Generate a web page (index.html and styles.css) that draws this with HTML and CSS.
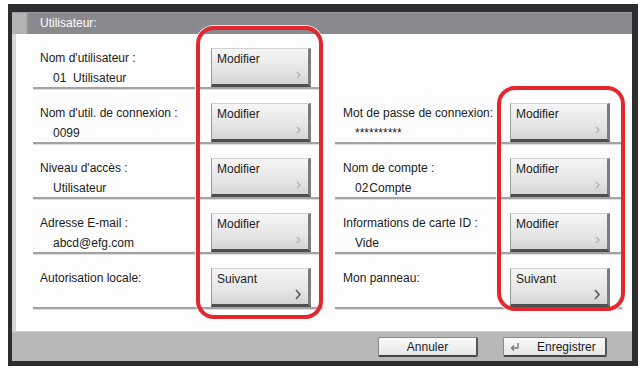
FILE: index.html
```html
<!DOCTYPE html>
<html lang="fr">
<head>
    <meta charset="UTF-8">
    <meta name="viewport" content="width=device-width, initial-scale=1.0">
    <title>Utilisateur</title>
    <link rel="stylesheet" href="styles.css">
</head>
<body>
    <div class="frame">
        <div class="title">Utilisateur:</div>

        <div class="content">
            <div class="field">
                <div class="info">
                    <div class="label">Nom d'utilisateur :</div>
                    <div class="value">01&nbsp; Utilisateur</div>
                </div>
                <button class="key">Modifier<svg class="arrow" width="8" height="8" viewBox="0 0 8 8"><path d="M2 1 L5 4 L2 7" /></svg></button>
            </div>
            <div class="field empty"></div>

            <div class="field">
                <div class="info">
                    <div class="label">Nom d'util. de connexion :</div>
                    <div class="value">0099</div>
                </div>
                <button class="key">Modifier<svg class="arrow" width="8" height="8" viewBox="0 0 8 8"><path d="M2 1 L5 4 L2 7" /></svg></button>
            </div>
            <div class="field">
                <div class="info">
                    <div class="label">Mot de passe de connexion:</div>
                    <div class="value">**********</div>
                </div>
                <button class="key">Modifier<svg class="arrow" width="8" height="8" viewBox="0 0 8 8"><path d="M2 1 L5 4 L2 7" /></svg></button>
            </div>

            <div class="field">
                <div class="info">
                    <div class="label">Niveau d'accès :</div>
                    <div class="value">Utilisateur</div>
                </div>
                <button class="key">Modifier<svg class="arrow" width="8" height="8" viewBox="0 0 8 8"><path d="M2 1 L5 4 L2 7" /></svg></button>
            </div>
            <div class="field">
                <div class="info">
                    <div class="label">Nom de compte :</div>
                    <div class="value">02<span class="tight">Compte</span></div>
                </div>
                <button class="key">Modifier<svg class="arrow" width="8" height="8" viewBox="0 0 8 8"><path d="M2 1 L5 4 L2 7" /></svg></button>
            </div>

            <div class="field">
                <div class="info">
                    <div class="label">Adresse E-mail :</div>
                    <div class="value">abcd@efg.com</div>
                </div>
                <button class="key">Modifier<svg class="arrow" width="8" height="8" viewBox="0 0 8 8"><path d="M2 1 L5 4 L2 7" /></svg></button>
            </div>
            <div class="field">
                <div class="info">
                    <div class="label">Informations de carte ID :</div>
                    <div class="value">Vide</div>
                </div>
                <button class="key">Modifier<svg class="arrow" width="8" height="8" viewBox="0 0 8 8"><path d="M2 1 L5 4 L2 7" /></svg></button>
            </div>

            <div class="field">
                <div class="info">
                    <div class="label">Autorisation locale:</div>
                </div>
                <button class="key next">Suivant<svg class="arrow" width="8" height="11" viewBox="0 0 8 11"><path d="M2 1 L6 5.5 L2 10" /></svg></button>
            </div>
            <div class="field">
                <div class="info">
                    <div class="label">Mon panneau:</div>
                </div>
                <button class="key next">Suivant<svg class="arrow" width="8" height="11" viewBox="0 0 8 11"><path d="M2 1 L6 5.5 L2 10" /></svg></button>
            </div>
        </div>

        <div class="footer">
            <button class="btn">Annuler</button>
            <button class="btn btn-save">
                <svg class="enter" width="12" height="10" viewBox="0 0 12 10"><path d="M9 1 V6 H3" /><path d="M5 3.5 L2.5 6 L5 8.5" /></svg>
                Enregistrer
            </button>
        </div>
    </div>

    <!-- cadres rouges de mise en evidence -->
    <div class="mark mark-left"></div>
    <div class="mark mark-right"></div>
</body>
</html>
```

FILE: styles.css
```css
/* Reset */
* {
    margin: 0;
    padding: 0;
    box-sizing: border-box;
}

body {
    font-family: "Liberation Sans", Arial, sans-serif;
    font-size: 12px;
    color: #1c1c1c;
    background-color: #fff;
    position: relative;
    width: 640px;
    height: 371px;
    overflow: hidden;
}

/* Cadre de l'ecran */
.frame {
    margin: 4px 0 0 8px;
    width: 630px;
    height: 362px;
    background-color: #2c2c31;
    border-style: solid;
    border-color: #2c2c31;
    border-width: 8px 6px 5px 4px;
    display: flex;
    flex-direction: column;
}

.title {
    height: 22px;
    line-height: 21px;
    padding-left: 28px;
    color: #fff;
    background: linear-gradient(to right, #b3b3b3 0, #b3b3b3 14px, #8a8a8e 16px);
    border-top: 1px solid #9a9a9e;
}

/* Zone des champs */
.content {
    height: 297px;
    background-color: #fdfdfd;
    border-left: 4px solid #d6d6d6;
    display: grid;
    grid-template-columns: 290px 287px;
    grid-auto-rows: 55px;
    column-gap: 12px;
    padding-left: 17px;
    align-content: start;
}

.field {
    display: flex;
    align-items: flex-start;
    border-bottom: 2px solid #a2a2a2;
    box-shadow: 0 1px 0 #dedede;
}

.field.empty {
    border-bottom: none;
    box-shadow: none;
}

.info {
    flex: 1;
    padding: 17px 0 0 7px;
    line-height: 15px;
    white-space: nowrap;
}

.field:nth-child(2n) .info {
    padding-left: 8px;
}

.value {
    margin-top: 5px;
    padding-left: 13px;
}

.field:nth-child(2n) .value {
    padding-left: 12px;
}

.tight {
    margin-left: 1px;
}

/* Touches Modifier / Suivant */
.key {
    position: relative;
    display: flex;
    align-items: flex-start;
    width: 100px;
    height: 39px;
    margin: 14px 12px 0 0;
    padding: 3px 0 0 5px;
    text-align: left;
    font: inherit;
    line-height: 15px;
    color: #1c1c1c;
    background: linear-gradient(#f6f6f6, #e2e2e2 70%, #d4d4d4);
    border-style: solid;
    border-width: 1px 3px 3px 1px;
    border-color: #d2d2d2 #7c7c7c #4e4e4e #9c9c9c;
}

.arrow {
    position: absolute;
    right: 5px;
    bottom: 5px;
    fill: none;
    stroke: #b4b4b4;
    stroke-width: 1.5;
}

.key.next .arrow {
    right: 6px;
    bottom: 4px;
    stroke: #5a5a5a;
    stroke-width: 1.6;
}

/* Barre du bas */
.footer {
    height: 30px;
    background-color: #b8b8b8;
    border-top: 1px solid #d0d0d0;
    display: flex;
    align-items: center;
    justify-content: flex-end;
    gap: 25px;
    padding: 1px 25px 0 0;
}

.btn {
    width: 100px;
    height: 20px;
    font: inherit;
    font-size: 12px;
    color: #1c1c1c;
    background: linear-gradient(#fbfbfb, #e6e6e6);
    border-style: solid;
    border-width: 1px 2px 2px 1px;
    border-color: #8a8a8a #555 #444 #8a8a8a;
    border-radius: 2px;
    display: flex;
    align-items: center;
    justify-content: center;
}

.btn-save {
    width: 104px;
    justify-content: flex-start;
    padding-left: 5px;
    gap: 16px;
}

.enter {
    fill: none;
    stroke: #7a7a7a;
    stroke-width: 1.4;
}

/* Cadres rouges */
.mark {
    position: absolute;
    border: 4px solid #e4262d;
    border-radius: 18px;
    box-shadow: 0 0 0 1px rgba(255, 255, 255, 0.8);
}

.mark-left {
    left: 196px;
    top: 26px;
    width: 127px;
    height: 293px;
}

.mark-right {
    left: 497px;
    top: 86px;
    width: 128px;
    height: 225px;
}
```
